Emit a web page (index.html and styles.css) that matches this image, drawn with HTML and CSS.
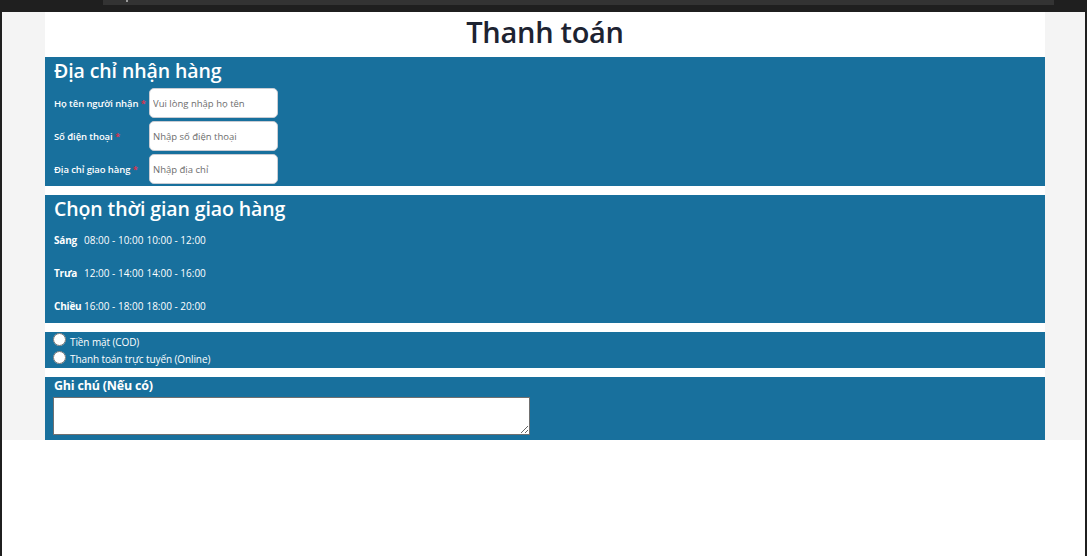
FILE: index.html
```html
<!DOCTYPE html>
<html lang="vi">
<head>
<meta charset="utf-8">
<title>Thanh toán</title>
<link rel="stylesheet" href="styles.css">
</head>
<body>
<div class="chrome"><div class="chrome-bar"><span class="chrome-dot"></span></div></div>
<div class="frame">
  <div class="page">
    <div class="container">
      <h1 class="title">Thanh toán</h1>
      <section class="panel address">
        <h2 class="panel-title">Địa chỉ nhận hàng</h2>
        <div class="field">
          <label class="field-label">Họ tên người nhận <span class="req">*</span></label>
          <input class="field-input" type="text" placeholder="Vui lòng nhập họ tên">
        </div>
        <div class="field">
          <label class="field-label">Số điện thoại <span class="req">*</span></label>
          <input class="field-input" type="text" placeholder="Nhập số điện thoại">
        </div>
        <div class="field">
          <label class="field-label">Địa chỉ giao hàng <span class="req">*</span></label>
          <input class="field-input" type="text" placeholder="Nhập địa chỉ">
        </div>
      </section>
      <section class="panel times">
        <h2 class="panel-title">Chọn thời gian giao hàng</h2>
        <div class="slot-row"><span class="slot-label">Sáng</span><span class="slot">08:00 - 10:00</span><span class="slot">10:00 - 12:00</span></div>
        <div class="slot-row"><span class="slot-label">Trưa</span><span class="slot">12:00 - 14:00</span><span class="slot">14:00 - 16:00</span></div>
        <div class="slot-row"><span class="slot-label">Chiều</span><span class="slot">16:00 - 18:00</span><span class="slot">18:00 - 20:00</span></div>
      </section>
      <section class="panel payment">
        <label class="pay-option"><input class="pay-radio" type="radio" name="pay"><span>Tiền mặt (COD)</span></label>
        <label class="pay-option"><input class="pay-radio" type="radio" name="pay"><span>Thanh toán trực tuyến (Online)</span></label>
      </section>
      <section class="panel note">
        <div class="note-title">Ghi chú (Nếu có)</div>
        <textarea class="note-input"></textarea>
      </section>
    </div>
  </div>
</div>
</body>
</html>
```
FILE: styles.css
```css
* { box-sizing: border-box; }
html, body { margin: 0; padding: 0; height: 100%; }
body {
  background: #ffffff;
  font-family: "Open Sans", "Noto Sans", sans-serif;
  display: flex;
  flex-direction: column;
}
.chrome {
  height: 12px;
  background: #1f1f1f;
  padding-left: 103px;
  padding-right: 33px;
  flex: none;
}
.chrome-bar {
  height: 5px;
  background: #333333;
  position: relative;
}
.chrome-dot {
  position: absolute;
  left: 23px;
  top: 0;
  width: 2px;
  height: 2px;
  background: #9a9a9a;
}
.frame {
  flex: 1;
  border-left: 2px solid #1f1f1f;
  border-right: 2px solid #1f1f1f;
  background: #ffffff;
}
.page {
  background: #f4f4f4;
  padding-left: 43px;
}
.container {
  width: 1000px;
  background: #ffffff;
  display: flex;
  flex-direction: column;
  gap: 9px;
}
.title {
  margin: 0;
  height: 36px;
  text-align: center;
  font-size: 29px;
  font-weight: 600;
  line-height: 39px;
  color: #1d2331;
  letter-spacing: -0.3px;
}
.panel {
  background: #18709d;
  color: #ffffff;
  padding: 0 9px;
}
.panel-title {
  margin: 0;
  font-size: 19.5px;
  font-weight: 600;
  line-height: 28px;
  letter-spacing: -0.1px;
}
.address { padding-bottom: 2px; }
.address .panel-title { margin-bottom: 3px; }
.field {
  display: flex;
  align-items: center;
  height: 30px;
  margin-bottom: 3px;
}
.field:last-child { margin-bottom: 0; }
.field-label {
  width: 95px;
  font-size: 9.5px;
  font-weight: 600;
  letter-spacing: -0.1px;
  white-space: nowrap;
}
.req { color: #e53049; }
.field-input {
  width: 129px;
  height: 30px;
  border: 1px solid #c9ccd3;
  border-radius: 5px;
  background: #ffffff;
  padding: 0 3px;
  font-family: "Open Sans", "Noto Sans", sans-serif;
  font-size: 9.5px;
  color: #333;
}
.field-input::placeholder { color: #6d6d6d; }
.times { padding-bottom: 1px; }
.times .panel-title { margin-bottom: 0; }
.slot-row {
  display: flex;
  align-items: center;
  height: 33px;
  font-size: 10px;
}
.slot-label {
  width: 30px;
  font-weight: 700;
  letter-spacing: -0.2px;
}
.slot { margin-right: 3px; letter-spacing: 0; }
.payment {
  padding: 1px 8px 0;
  display: flex;
  flex-direction: column;
  height: 36px;
}
.pay-option {
  display: flex;
  align-items: center;
  height: 18px;
  font-size: 10px;
  letter-spacing: -0.1px;
}
.pay-radio {
  margin: 0 4px 0 0;
  width: 13px;
  height: 13px;
  position: relative;
  top: -2px;
}
.note {
  height: 63px;
  padding: 0 8px;
}
.note-title {
  font-size: 12.5px;
  font-weight: 700;
  line-height: 17px;
  margin: 0 0 3px 1px;
  letter-spacing: -0.2px;
}
.note-input {
  display: block;
  width: 477px;
  height: 38px;
  border: 1px solid #707070;
  background: #ffffff;
  resize: both;
}
```
